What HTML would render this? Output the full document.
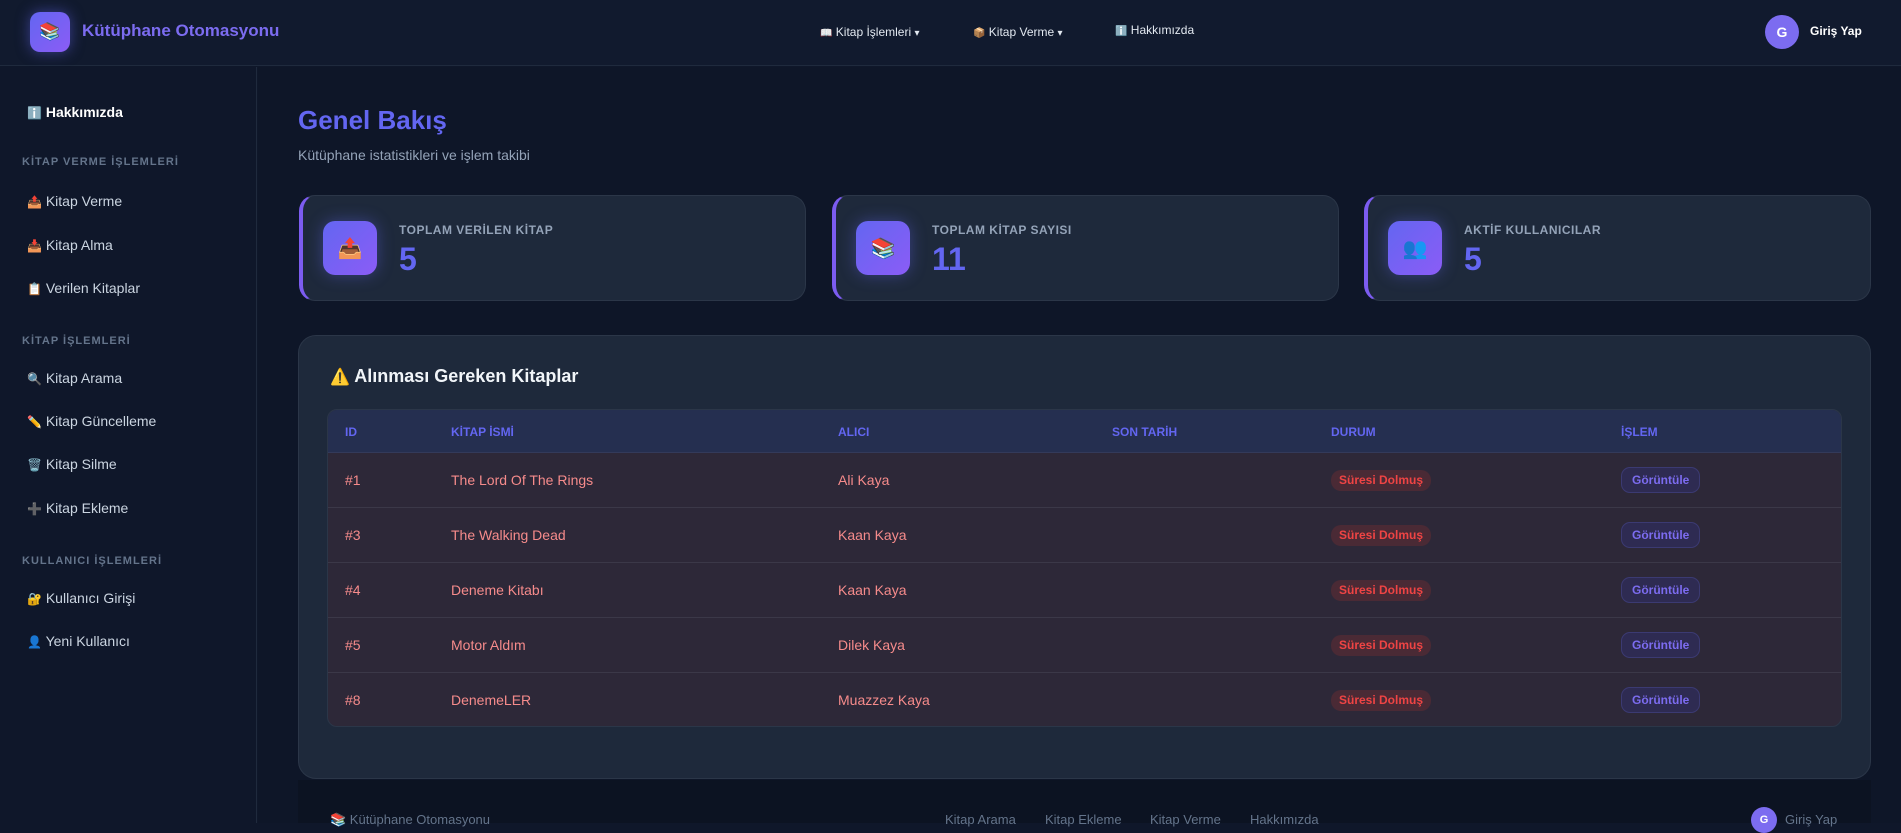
<!DOCTYPE html>
<html><head><meta charset="utf-8"><style>
*{box-sizing:border-box;margin:0;padding:0}
body{width:1901px;height:823px;overflow:hidden;background:#0f172a;font-family:"Liberation Sans","Noto Sans CJK JP",sans-serif;color:#cbd5e1;position:relative}
.hdr{position:absolute;left:0;top:0;width:1901px;height:66px;background:#111a2e;border-bottom:1px solid #1f2a3d}
.logo{position:absolute;left:30px;top:12px;width:40px;height:40px;border-radius:10px;background:linear-gradient(135deg,#6366f1,#8b5cf6);box-shadow:0 0 14px rgba(99,102,241,.5);display:flex;align-items:center;justify-content:center;font-size:17px}
.brand{position:absolute;left:82px;top:21px;font-size:17px;font-weight:bold;color:#7c6cf0}
.nav{position:absolute;top:25px;font-size:12px;color:#e2e8f0}
.nav i{font-style:normal;font-size:10px}
.av{position:absolute;width:34px;height:34px;border-radius:50%;background:#7c6cf0;color:#fff;font-weight:bold;font-size:14px;display:flex;align-items:center;justify-content:center}
.side{position:absolute;left:0;top:67px;width:257px;height:756px;background:#0f172a;border-right:1px solid #1f2a3d}
.si{position:absolute;left:27px;font-size:14px;color:#cbd5e1}
.si i{font-style:normal;font-size:12px}
.sh{position:absolute;left:22px;font-size:11px;font-weight:bold;letter-spacing:1px;color:#64748b}
.main{position:absolute;left:258px;top:67px;right:0;bottom:0;background:#0e1628}
h1{position:absolute;left:298px;top:105px;font-size:26px;color:#6366f1}
.sub{position:absolute;left:298px;top:147px;font-size:14px;color:#94a3b8}
.card{position:absolute;top:195px;height:106px;width:507px;background:#1e293b;border:1px solid #2b3648;border-left:4px solid #7c5cf0;border-radius:16px}
.ic{position:absolute;left:20px;top:25px;width:54px;height:54px;border-radius:12px;background:linear-gradient(135deg,#6366f1,#8b5cf6);box-shadow:0 0 16px rgba(99,102,241,.4);display:flex;align-items:center;justify-content:center;font-size:20px}
.cl{position:absolute;left:96px;top:27px;font-size:12px;font-weight:bold;letter-spacing:.5px;color:#94a3b8}
.cn{position:absolute;left:96px;top:45px;font-size:32px;font-weight:bold;color:#6366f1}
.panel{position:absolute;left:298px;top:335px;width:1573px;height:444px;background:#1e293b;border:1px solid #2b3648;border-radius:18px}
.pt{position:absolute;left:330px;top:366px;font-size:18px;font-weight:bold;color:#f1f5f9}
.tbl{position:absolute;left:327px;top:409px;width:1515px;height:318px;border:1px solid #2b3648;border-radius:10px;overflow:hidden;background:#2d2838}
.th{position:absolute;left:0;top:0;width:100%;height:43px;background:#252f50;border-bottom:1px solid #333a5a}
.th span{position:absolute;top:15px;font-size:12px;font-weight:bold;color:#6366f1}
.row{position:absolute;left:0;width:100%;height:55px;border-bottom:1px solid #3b3848}
.row span{position:absolute;top:19px;font-size:14px;color:#f68b8b}
.bd{position:absolute;top:17px;height:21px;padding:0 8px;border-radius:10px;background:#4a2a35;color:#ef4444;font-size:12px;font-weight:bold;line-height:21px}
.bt{position:absolute;top:14px;height:26px;padding:0 10px;border-radius:9px;background:#2e2b52;border:1px solid #3b3a72;color:#7c6cf0;font-size:12px;font-weight:bold;line-height:24px}
.foot{position:absolute;left:298px;top:780px;width:1573px;height:43px;background:#0c1322}
.fl{position:absolute;top:812px;font-size:13px;color:#64748b}
</style></head><body>
<div class="hdr">
<div class="logo">📚</div><div class="brand">Kütüphane Otomasyonu</div>
<div class="nav" style="left:820px"><i>📖</i> Kitap İşlemleri <i>▾</i></div>
<div class="nav" style="left:973px"><i>📦</i> Kitap Verme <i>▾</i></div>
<div class="nav" style="left:1115px;top:23px"><i>ℹ️</i> Hakkımızda</div>
<div class="av" style="left:1765px;top:15px">G</div>
<div class="nav" style="left:1810px;top:24px;font-weight:bold;color:#fff">Giriş Yap</div>
</div>
<div class="side">
<div class="si" style="top:37px;color:#fff;font-weight:bold"><i>ℹ️</i> Hakkımızda</div>
<div class="sh" style="top:89px">KİTAP VERME İŞLEMLERİ</div>
<div class="si" style="top:126px"><i>📤</i> Kitap Verme</div>
<div class="si" style="top:170px"><i>📥</i> Kitap Alma</div>
<div class="si" style="top:213px"><i>📋</i> Verilen Kitaplar</div>
<div class="sh" style="top:268px">KİTAP İŞLEMLERİ</div>
<div class="si" style="top:303px"><i>🔍</i> Kitap Arama</div>
<div class="si" style="top:346px"><i>✏️</i> Kitap Güncelleme</div>
<div class="si" style="top:389px"><i>🗑️</i> Kitap Silme</div>
<div class="si" style="top:433px"><i>➕</i> Kitap Ekleme</div>
<div class="sh" style="top:488px">KULLANICI İŞLEMLERİ</div>
<div class="si" style="top:523px"><i>🔐</i> Kullanıcı Girişi</div>
<div class="si" style="top:566px"><i>👤</i> Yeni Kullanıcı</div>
</div>
<div class="main"></div>
<h1>Genel Bakış</h1>
<div class="sub">Kütüphane istatistikleri ve işlem takibi</div>
<div class="card" style="left:299px"><div class="ic">📤</div><div class="cl">TOPLAM VERİLEN KİTAP</div><div class="cn">5</div></div>
<div class="card" style="left:832px"><div class="ic">📚</div><div class="cl">TOPLAM KİTAP SAYISI</div><div class="cn">11</div></div>
<div class="card" style="left:1364px"><div class="ic">👥</div><div class="cl">AKTİF KULLANICILAR</div><div class="cn">5</div></div>
<div class="panel"></div>
<div class="pt"><span style="font-size:16px">⚠️</span> Alınması Gereken Kitaplar</div>
<div class="tbl">
<div class="th"><span style="left:17px">ID</span><span style="left:123px">KİTAP İSMİ</span><span style="left:510px">ALICI</span><span style="left:784px">SON TARİH</span><span style="left:1003px">DURUM</span><span style="left:1293px">İŞLEM</span></div>
<div class="row" style="top:43px"><span style="left:17px">#1</span><span style="left:123px">The Lord Of The Rings</span><span style="left:510px">Ali Kaya</span><div class="bd" style="left:1003px">Süresi Dolmuş</div><div class="bt" style="left:1293px">Görüntüle</div></div>
<div class="row" style="top:98px"><span style="left:17px">#3</span><span style="left:123px">The Walking Dead</span><span style="left:510px">Kaan Kaya</span><div class="bd" style="left:1003px">Süresi Dolmuş</div><div class="bt" style="left:1293px">Görüntüle</div></div>
<div class="row" style="top:153px"><span style="left:17px">#4</span><span style="left:123px">Deneme Kitabı</span><span style="left:510px">Kaan Kaya</span><div class="bd" style="left:1003px">Süresi Dolmuş</div><div class="bt" style="left:1293px">Görüntüle</div></div>
<div class="row" style="top:208px"><span style="left:17px">#5</span><span style="left:123px">Motor Aldım</span><span style="left:510px">Dilek Kaya</span><div class="bd" style="left:1003px">Süresi Dolmuş</div><div class="bt" style="left:1293px">Görüntüle</div></div>
<div class="row" style="top:263px;border-bottom:none"><span style="left:17px">#8</span><span style="left:123px">DenemeLER</span><span style="left:510px">Muazzez Kaya</span><div class="bd" style="left:1003px">Süresi Dolmuş</div><div class="bt" style="left:1293px">Görüntüle</div></div>
</div>
<div class="foot"></div>
<div class="fl" style="left:330px">📚 Kütüphane Otomasyonu</div>
<div class="fl" style="left:945px">Kitap Arama</div>
<div class="fl" style="left:1045px">Kitap Ekleme</div>
<div class="fl" style="left:1150px">Kitap Verme</div>
<div class="fl" style="left:1250px">Hakkımızda</div>
<div class="av" style="left:1751px;top:807px;width:26px;height:26px;font-size:11px">G</div>
<div class="fl" style="left:1785px">Giriş Yap</div>
</body></html>
